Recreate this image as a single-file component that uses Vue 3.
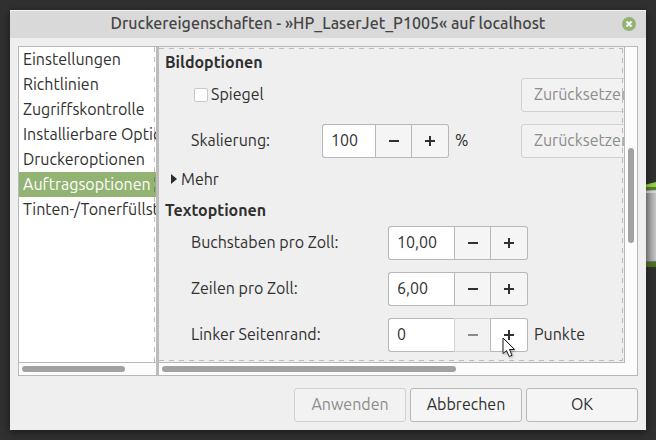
<template>
  <div class="desktop">
    <!-- Icon of the window behind the dialog -->
    <svg class="desktop-icon" width="10" height="86" viewBox="0 0 10 86" aria-hidden="true">
      <defs>
        <linearGradient id="icon-body">
          <stop offset="0" stop-color="#929292" />
          <stop offset="1" stop-color="#c4c4c4" />
        </linearGradient>
      </defs>
      <rect y="8" width="10" height="72" fill="url(#icon-body)" />
      <path d="M0 2.500L10 0V6H0Z" fill="#94cc48" />
      <rect y="5" width="10" height="3" fill="#57802c" />
      <rect y="9" width="10" height="2" fill="#d4d4d4" />
      <rect y="79" width="10" height="1" fill="#777777" />
      <rect y="80" width="10" height="5" fill="#4c7125" />
    </svg>

    <div class="dialog" role="dialog" aria-labelledby="dialog-title">
      <!-- Title Bar -->
      <header class="title-bar">
        <h1 id="dialog-title" class="title">Druckereigenschaften - »HP_LaserJet_P1005« auf localhost</h1>
        <button class="close-btn" type="button" aria-label="Schließen">
          <svg width="14" height="14" viewBox="0 0 14 14" aria-hidden="true">
            <circle cx="7" cy="7" r="7" fill="#92b372" />
            <path d="M4.500 4.500L9.500 9.500M9.500 4.500L4.500 9.500" stroke="#ffffff" stroke-width="2" />
          </svg>
        </button>
      </header>

      <div class="dialog-body">
        <div class="panes">
          <!-- Section List -->
          <div class="sidebar">
            <ul class="section-list">
              <li v-for="section in sections" :key="section">
                <button
                  class="section-item"
                  :class="{ active: section === activeSection }"
                  type="button"
                  @click="activeSection = section"
                >{{ section }}</button>
              </li>
            </ul>
            <div class="scrollbar-x"><div class="thumb sidebar-thumb"></div></div>
          </div>

          <!-- Options -->
          <div class="options">
            <div class="options-view">
              <h2 class="group-title">Bildoptionen</h2>
              <div class="option-rows">
                <div class="option-row image-row">
                  <div class="check-field">
                    <input id="mirror" v-model="mirror" class="check" type="checkbox">
                    <label for="mirror" class="option-label">Spiegel</label>
                  </div>
                  <button class="btn" type="button" disabled>Zurücksetzen</button>
                </div>
                <div class="option-row image-row">
                  <label for="scaling" class="option-label">Skalierung:</label>
                  <div class="control">
                    <div class="spin">
                      <input id="scaling" v-model="scaling" class="spin-input short" type="text">
                      <button class="spin-btn" type="button" aria-label="Verringern" @click="scaling = step(scaling, -1)">
                        <svg width="10" height="10" viewBox="0 0 10 10"><path d="M0 5H10" /></svg>
                      </button>
                      <button class="spin-btn" type="button" aria-label="Erhöhen" @click="scaling = step(scaling, 1)">
                        <svg width="10" height="10" viewBox="0 0 10 10"><path d="M0 5H10M5 0V10" /></svg>
                      </button>
                    </div>
                    <span class="option-label">%</span>
                  </div>
                  <button class="btn" type="button" disabled>Zurücksetzen</button>
                </div>
              </div>

              <button class="expander" type="button" aria-expanded="false">
                <svg width="6" height="10" viewBox="0 0 6 10" aria-hidden="true"><path d="M0 0L6 5L0 10Z" fill="#2b2e30" /></svg>
                Mehr
              </button>

              <h2 class="group-title">Textoptionen</h2>
              <div class="option-rows">
                <div v-for="option in textOptions" :key="option.id" class="option-row text-row">
                  <label :for="option.id" class="option-label">{{ option.label }}</label>
                  <div class="control">
                    <div class="spin">
                      <input :id="option.id" v-model="option.value" class="spin-input" type="text">
                      <button
                        class="spin-btn"
                        type="button"
                        aria-label="Verringern"
                        :disabled="option.value === '0'"
                        @click="option.value = step(option.value, -1)"
                      >
                        <svg width="10" height="10" viewBox="0 0 10 10"><path d="M0 5H10" /></svg>
                      </button>
                      <button
                        class="spin-btn"
                        :class="{ hovered: option.hovered }"
                        type="button"
                        aria-label="Erhöhen"
                        @click="option.value = step(option.value, 1)"
                      >
                        <svg width="10" height="10" viewBox="0 0 10 10"><path d="M0 5H10M5 0V10" /></svg>
                        <svg v-if="option.hovered" class="pointer" width="14" height="21" viewBox="0 0 14 21">
                          <path d="M1 1V16.500L4.500 13.500L7.200 19.500L10 18.300L7.500 12.500H12.500Z" />
                        </svg>
                      </button>
                    </div>
                    <span v-if="option.unit" class="option-label">{{ option.unit }}</span>
                  </div>
                </div>
              </div>
            </div>
            <div class="scrollbar-y"><div class="thumb options-thumb-y"></div></div>
            <div class="scrollbar-x"><div class="thumb options-thumb-x"></div></div>
          </div>
        </div>

        <!-- Dialog Actions -->
        <footer class="actions">
          <button class="btn" type="button" disabled>Anwenden</button>
          <button class="btn" type="button">Abbrechen</button>
          <button class="btn" type="button">OK</button>
        </footer>
      </div>
    </div>
  </div>
</template>

<script setup>
import { ref } from 'vue'

const sections = [
  'Einstellungen',
  'Richtlinien',
  'Zugriffskontrolle',
  'Installierbare Optionen',
  'Druckeroptionen',
  'Auftragsoptionen',
  'Tinten-/Tonerfüllstände'
]

const activeSection = ref('Auftragsoptionen')
const mirror = ref(false)
const scaling = ref('100')

const textOptions = ref([
  { id: 'cpi', label: 'Buchstaben pro Zoll:', value: '10,00' },
  { id: 'lpi', label: 'Zeilen pro Zoll:', value: '6,00' },
  { id: 'margin-left', label: 'Linker Seitenrand:', value: '0', unit: 'Punkte', hovered: true }
])

// Values keep the number of decimals they were entered with
const step = (value, amount) => {
  const decimals = (value.split(',')[1] || '').length
  const next = Math.max(0, parseFloat(value.replace(',', '.')) + amount)
  return next.toFixed(decimals).replace('.', ',')
}
</script>

<style>
body {
  margin: 0;
  background: #303030;
}
</style>

<style scoped>
.desktop {
  position: relative;
  padding: 10px;
  overflow: hidden;
  font-family: Ubuntu, 'Noto Sans', 'Open Sans', sans-serif;
  font-size: 16px;
  line-height: 24px;
  color: #303030;
}

.desktop-icon {
  position: absolute;
  top: 182px;
  right: 0;
}

.dialog {
  position: relative;
  background: #efefef;
  box-shadow: 0 2px 8px rgba(0, 0, 0, 0.5);
}

button,
input {
  font: inherit;
  color: inherit;
  box-sizing: border-box;
  margin: 0;
}

/* Title bar */
.title-bar {
  display: grid;
  grid-template-columns: 24px 1fr 24px;
  align-items: center;
  height: 28px;
  background: #d9d9d9;
  border-radius: 2px 2px 0 0;
  box-shadow: inset 0 1px #f4f4f4;
}

.title {
  grid-column: 2;
  margin: 0;
  padding-bottom: 2px;
  font-size: 16px;
  font-weight: 500;
  line-height: 24px;
  text-align: center;
  white-space: nowrap;
  color: #454545;
}

.close-btn {
  display: flex;
  padding: 0;
  border: none;
  background: none;
}

.dialog-body {
  padding: 8px;
}

/* Panes */
.panes {
  display: flex;
  border: 1px solid #b8b8b8;
}

.sidebar {
  display: flex;
  flex-direction: column;
  flex: 0 0 137px;
  min-width: 0;
  background: #ffffff;
  border-right: 3px solid #bcbcbc;
}

.section-list {
  position: relative;
  flex: 1;
  margin: 0;
  padding: 0;
  overflow: hidden;
  list-style: none;
}

.section-list::after {
  content: '';
  position: absolute;
  top: 0;
  right: 1px;
  bottom: 0;
  width: 1px;
  background: repeating-linear-gradient(to bottom, rgba(0, 0, 0, 0.25) 0 5px, transparent 5px 10px);
}

.section-item {
  display: block;
  width: 100%;
  height: 25px;
  padding: 0 4px 2px;
  border: none;
  background: none;
  line-height: 24px;
  text-align: left;
  white-space: nowrap;
}

.section-item.active {
  background: #92b372;
  color: #ffffff;
}

.options {
  display: grid;
  grid-template-columns: 1fr 12px;
  flex: 1;
  min-width: 0;
  background: #fcfcfc;
}

.options-view {
  position: relative;
  min-width: 0;
  padding: 3px 0 10px 6px;
  overflow: hidden;
  background: #efefef;
  border-right: 1px solid #b8b8b8;
}

.options-view::after {
  content: '';
  position: absolute;
  top: 1px;
  right: 1px;
  bottom: 1px;
  left: 0;
  background:
    repeating-linear-gradient(to right, #bcbcbc 0 5px, transparent 5px 10px) top / 100% 1px no-repeat,
    repeating-linear-gradient(to right, #bcbcbc 0 5px, transparent 5px 10px) bottom / 100% 1px no-repeat,
    repeating-linear-gradient(to bottom, #bcbcbc 0 5px, transparent 5px 10px) right / 1px 100% no-repeat;
  pointer-events: none;
}

.group-title {
  margin: 0 0 4px;
  font-size: 16px;
  font-weight: 700;
  line-height: 24px;
}

.option-rows {
  display: flex;
  flex-direction: column;
  gap: 12px;
  padding-left: 26px;
}

.option-row {
  display: grid;
  align-items: center;
  white-space: nowrap;
}

.image-row {
  grid-template-columns: 131px 199px 120px;
}

.text-row {
  grid-template-columns: 197px 1fr;
}

.option-label {
  padding-bottom: 2px;
}

.check-field {
  display: flex;
  align-items: center;
  grid-column: 1 / 3;
  gap: 3px;
}

.check {
  appearance: none;
  width: 14px;
  height: 14px;
  margin-left: 3px;
  background: #ffffff;
  border: 1px solid #c8c8c8;
  border-radius: 2px;
}

.check:checked {
  background: #92b372;
}

.control {
  display: flex;
  align-items: center;
  gap: 6px;
}

/* Spin buttons */
.spin {
  display: flex;
  height: 34px;
}

.spin-input {
  width: 66px;
  padding: 0 8px 2px;
  background: #ffffff;
  border: 1px solid #b8b8b8;
  border-right: none;
  border-radius: 3px 0 0 3px;
}

.spin-input.short {
  width: 53px;
}

.spin-btn {
  position: relative;
  display: flex;
  align-items: center;
  justify-content: center;
  width: 37px;
  padding: 0;
  background: #f5f5f5;
  border: 1px solid #b8b8b8;
}

.spin-btn + .spin-btn {
  border-left: none;
  border-radius: 0 3px 3px 0;
}

.spin-btn path {
  fill: none;
  stroke: #303030;
  stroke-width: 2;
}

.spin-btn:disabled {
  background: #f2f2f2;
  border-color: #d4d4d4 #b8b8b8 #d4d4d4 #d4d4d4;
}

.spin-btn:disabled path {
  stroke: #8c8c8c;
}

.spin-btn:hover,
.spin-btn.hovered {
  background: #ffffff;
}

.pointer {
  position: absolute;
  top: 18px;
  left: 11px;
  filter: drop-shadow(1px 1px 1px rgba(0, 0, 0, 0.3));
}

.spin-btn .pointer path {
  fill: #ffffff;
  stroke: #1c1c1c;
  stroke-width: 1;
}

.expander {
  display: flex;
  align-items: center;
  gap: 4px;
  margin: 9px 0 7px;
  padding: 0 0 0 6px;
  border: none;
  background: none;
}

/* Scrollbars */
.scrollbar-x {
  display: flex;
  align-items: center;
  height: 12px;
  padding: 0 3px;
  background: #fcfcfc;
  border-top: 1px solid #b8b8b8;
}

.scrollbar-y {
  display: flex;
  justify-content: center;
}

.thumb {
  background: #a2a2a2;
  border-radius: 3px;
}

.sidebar-thumb {
  width: 79%;
  height: 6px;
}

.options-thumb-x {
  width: 64%;
  height: 6px;
}

.options-thumb-y {
  width: 6px;
  height: 30%;
  margin-top: 101px;
}

/* Buttons */
.btn {
  height: 34px;
  padding: 0 12px 2px;
  background: #f5f5f5;
  border: 1px solid #b8b8b8;
  border-radius: 3px;
  text-align: left;
  white-space: nowrap;
}

.btn:disabled {
  color: #8c8c8c;
  background: #f2f2f2;
  border-color: #d0d0d0;
}

.actions {
  display: flex;
  justify-content: flex-end;
  gap: 4px;
  margin-top: 12px;
}

.actions .btn {
  width: 112px;
  text-align: center;
}
</style>
